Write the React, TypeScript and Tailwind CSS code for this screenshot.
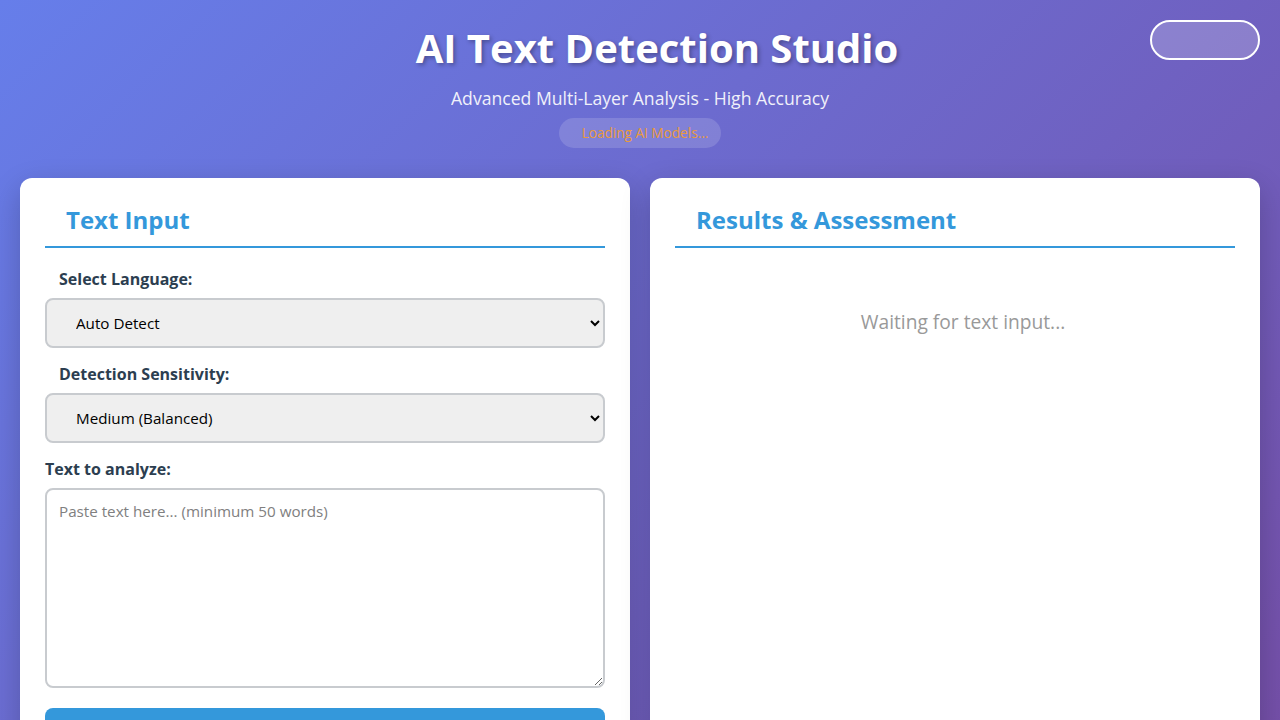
import React from "react";

export default function App() {
  return (
    <div
      className="relative min-h-[900px] w-full bg-[linear-gradient(135deg,#667eea_0%,#764ba2_100%)] px-5 pb-10"
      style={{ fontFamily: '"Open Sans", "Noto Sans", sans-serif' }}
    >
      <button className="absolute right-5 top-5 h-10 w-[110px] rounded-full border-2 border-white bg-white/20"></button>

      <header className="flex flex-col items-center pt-[24px] text-center text-white">
        <h1 className="pl-[34px] text-[40px] font-bold leading-[48px] [text-shadow:2px_2px_4px_rgba(0,0,0,0.3)]">
          AI Text Detection Studio
        </h1>
        <p className="mt-[14px] text-[17.6px] leading-[24px] opacity-90">
          Advanced Multi-Layer Analysis - High Accuracy
        </p>
        <div className="mt-[8px] flex h-[30px] w-[162px] items-center justify-center rounded-full bg-white/15 pl-[10px] text-[13.6px] text-[#ea9a3c]">
          Loading AI Models...
        </div>
      </header>

      <main className="mt-[30px] grid grid-cols-2 gap-5">
        <section className="min-h-[700px] rounded-[12px] bg-white p-[25px] shadow-[0_10px_30px_rgba(0,0,0,0.2)]">
          <h2 className="border-b-2 border-[#3498db] pb-[10px] pl-[21px] text-[24px] font-bold leading-[33px] text-[#3498db]">
            Text Input
          </h2>
          <div className="mt-[20px]">
            <label className="block pl-[14px] text-[16px] font-bold leading-[22px] text-[#2c3e50]">
              Select Language:
            </label>
            <select className="mt-[8px] h-[50px] w-full rounded-[8px] border-2 border-[#c8cbcf] bg-[#efefef] pl-[25px] pr-2 text-[15.2px] text-black">
              <option>Auto Detect</option>
            </select>
          </div>
          <div className="mt-[15px]">
            <label className="block pl-[14px] text-[16px] font-bold leading-[22px] text-[#2c3e50]">
              Detection Sensitivity:
            </label>
            <select className="mt-[8px] h-[50px] w-full rounded-[8px] border-2 border-[#c8cbcf] bg-[#efefef] pl-[25px] pr-2 text-[15.2px] text-black">
              <option>Medium (Balanced)</option>
            </select>
          </div>
          <div className="mt-[15px]">
            <label className="block text-[16px] font-bold leading-[22px] text-[#2c3e50]">
              Text to analyze:
            </label>
            <textarea
              className="mt-[8px] block h-[200px] w-full rounded-[8px] border-2 border-[#c8cbcf] px-3 pt-[10px] text-[15.2px] placeholder:text-[#808080]"
              placeholder="Paste text here... (minimum 50 words)"
            ></textarea>
          </div>
          <button className="mt-[20px] h-[50px] w-full rounded-[8px] bg-[#3498db]"></button>
        </section>

        <section className="min-h-[700px] rounded-[12px] bg-white p-[25px] shadow-[0_10px_30px_rgba(0,0,0,0.2)]">
          <h2 className="border-b-2 border-[#3498db] pb-[10px] pl-[21px] text-[24px] font-bold leading-[33px] text-[#3498db]">
            Results &amp; Assessment
          </h2>
          <p className="mt-[60px] pl-[16px] text-center text-[19.2px] leading-[28px] text-[#999]">
            Waiting for text input...
          </p>
        </section>
      </main>
    </div>
  );
}
